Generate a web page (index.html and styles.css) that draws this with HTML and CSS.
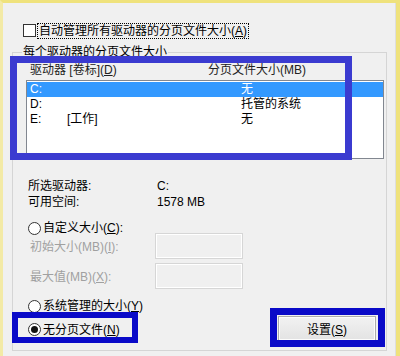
FILE: index.html
```html
<!DOCTYPE html>
<html lang="zh-CN">
<head>
    <meta charset="UTF-8">
    <meta name="viewport" content="width=device-width, initial-scale=1.0">
    <title>虚拟内存</title>
    <link rel="stylesheet" href="styles.css">
</head>
<body>
    <div class="window">
        <div class="panel">
            <div class="auto-row">
                <span class="checkbox"></span>
                <span class="focus-text">自动管理所有驱动器的分页文件大小(<u>A</u>)</span>
            </div>

            <fieldset class="group">
                <legend>每个驱动器的分页文件大小</legend>

                <div class="list-head">
                    <span class="col-drive">驱动器 [卷标](<u>D</u>)</span>
                    <span class="col-size">分页文件大小(MB)</span>
                </div>

                <ul class="drive-list">
                    <li class="selected"><span class="col-drive"><span class="letter">C:</span></span><span class="col-size">无</span></li>
                    <li><span class="col-drive"><span class="letter">D:</span></span><span class="col-size">托管的系统</span></li>
                    <li><span class="col-drive"><span class="letter">E:</span>[工作]</span><span class="col-size">无</span></li>
                </ul>

                <div class="info-row first">
                    <span class="info-label">所选驱动器:</span>
                    <span class="info-value">C:</span>
                </div>
                <div class="info-row">
                    <span class="info-label">可用空间:</span>
                    <span class="info-value">1578 MB</span>
                </div>

                <div class="radio-row custom">
                    <span class="radio"></span>
                    <span>自定义大小(<u>C</u>):</span>
                </div>
                <div class="size-row">
                    <span class="size-label">初始大小(MB)(<u>I</u>):</span>
                    <span class="size-input"></span>
                </div>
                <div class="size-row">
                    <span class="size-label">最大值(MB)(<u>X</u>):</span>
                    <span class="size-input"></span>
                </div>

                <div class="radio-row system">
                    <span class="radio"></span>
                    <span>系统管理的大小(<u>Y</u>)</span>
                </div>

                <div class="bottom-row">
                    <div class="radio-row">
                        <span class="radio checked"></span>
                        <span>无分页文件(<u>N</u>)</span>
                    </div>
                    <button class="btn" type="button">设置(<u>S</u>)</button>
                </div>
            </fieldset>
        </div>

        <!-- highlight marks drawn over the dialog -->
        <div class="mark mark-list"></div>
        <div class="mark mark-radio"></div>
        <div class="mark mark-button"></div>
    </div>
</body>
</html>
```

FILE: styles.css
```css
* {
    box-sizing: border-box;
    margin: 0;
    padding: 0;
}

body {
    width: 400px;
    height: 356px;
    overflow: hidden;
    background-color: #f0f0f0;
    font-family: "Liberation Sans", "Noto Sans CJK SC", sans-serif;
    font-size: 12px;
    color: #000;
}

u {
    text-decoration: underline;
    text-underline-offset: 1px;
}

.window {
    position: relative;
    width: 400px;
    height: 356px;
    border-top: 3px solid #efe27c;
    border-left: 3px solid #f3eaa6;
    border-right: 4px solid #efe27c;
}

.panel {
    height: 100%;
    border-right: 1px solid #dedede;
    padding-top: 20px;
}

.auto-row {
    display: flex;
    align-items: center;
    height: 15px;
    padding-left: 20px;
}

.checkbox {
    flex: none;
    width: 13px;
    height: 13px;
    margin-right: 2px;
    background-color: #fff;
    border: 1px solid #333;
}

.focus-text {
    line-height: 13px;
    padding: 1px 1px 0;
    outline: 1px dotted #000;
}

.group {
    margin: 7px 0 0 9px;
    width: 375px;
    height: 306px;
    border: 1px solid #d5d5d5;
    padding: 0;
    min-width: 0;
}

.group legend {
    margin-left: 9px;
    padding: 0 1px;
    line-height: 14px;
}

.list-head {
    display: flex;
    margin-top: 4px;
    height: 14px;
    line-height: 14px;
    padding-left: 17px;
    color: #222;
}

.list-head .col-drive {
    width: 178px;
}

.drive-list {
    list-style: none;
    margin: 3px 0 0 13px;
    width: 358px;
    height: 79px;
    background-color: #fff;
    border: 1px solid #828790;
    padding-top: 1px;
}

.drive-list li {
    display: flex;
    height: 15px;
    line-height: 15px;
    padding-left: 3px;
}

.drive-list .col-drive {
    width: 211px;
}

.drive-list .letter {
    display: inline-block;
    width: 37px;
}

.drive-list li.selected {
    background-color: #3399ff;
    color: #fff;
}

.info-row {
    display: flex;
    height: 16px;
    line-height: 16px;
    padding-left: 15px;
}

.info-row.first {
    margin-top: 19px;
}

.info-label {
    width: 129px;
}

.radio-row {
    display: flex;
    align-items: center;
    gap: 2px;
    height: 16px;
    line-height: 16px;
    padding-left: 15px;
}

.radio-row.custom {
    margin-top: 10px;
    margin-bottom: -3px;
}

.radio-row.system {
    margin-top: 9px;
}

.radio {
    position: relative;
    width: 13px;
    height: 13px;
    border-radius: 50%;
    border: 1px solid #333;
    background-color: #fff;
}

.radio.checked::after {
    content: "";
    position: absolute;
    left: 2px;
    top: 2px;
    width: 7px;
    height: 7px;
    border-radius: 50%;
    background-color: #111;
}

.size-row {
    display: flex;
    align-items: center;
    height: 26px;
    padding-left: 17px;
    margin-bottom: 4px;
    color: #a0a0a0;
}

.size-label {
    width: 125px;
    padding-bottom: 1px;
}

.size-input {
    width: 88px;
    height: 26px;
    border: 1px solid #d6d6d6;
    box-shadow: inset 0 0 0 1px #fff;
    background-color: #f0f0f0;
}

.bottom-row {
    display: flex;
    justify-content: space-between;
    align-items: center;
    margin-top: 1px;
    height: 26px;
    padding-right: 10px;
}

.bottom-row .radio-row {
    padding-top: 3px;
}

.btn {
    width: 98px;
    height: 25px;
    font-family: inherit;
    font-size: 12px;
    color: #000;
    background: linear-gradient(#f2f2f2, #e3e3e3);
    border: 1px solid #acacac;
    box-shadow: inset 0 0 0 1px #fcfcfc;
}

.mark {
    position: absolute;
    border-style: solid;
}

.mark-list {
    left: 7px;
    top: 53px;
    width: 342px;
    height: 104px;
    border-width: 7px;
    border-color: #3b3bd0;
}

.mark-radio {
    left: 9px;
    top: 309px;
    width: 126px;
    height: 31px;
    border-width: 6px;
    border-color: #0a0ac8;
}

.mark-button {
    left: 267px;
    top: 305px;
    width: 115px;
    height: 39px;
    border-width: 7px;
    border-color: #0a0ac8;
}
```
